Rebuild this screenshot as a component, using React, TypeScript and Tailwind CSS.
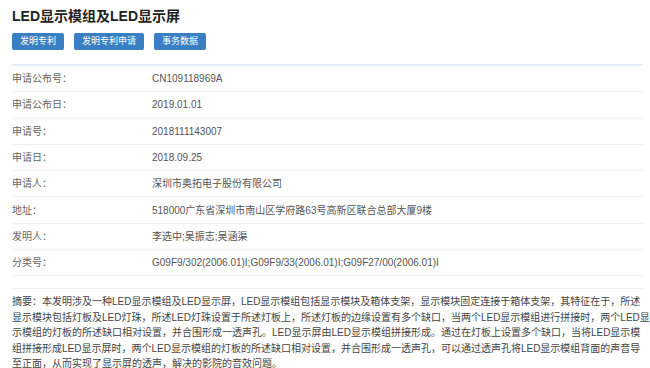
const rows = [
  { label: "申请公布号：", value: "CN109118969A" },
  { label: "申请公布日：", value: "2019.01.01" },
  { label: "申请号：", value: "2018111143007" },
  { label: "申请日：", value: "2018.09.25" },
  { label: "申请人：", value: "深圳市奥拓电子股份有限公司" },
  { label: "地址：", value: "518000广东省深圳市南山区学府路63号高新区联合总部大厦9楼" },
  { label: "发明人：", value: "李选中;吴振志;吴涵渠" },
  {
    label: "分类号：",
    value: "G09F9/302(2006.01)I;G09F9/33(2006.01)I;G09F27/00(2006.01)I",
  },
];

const tabs = ["发明专利", "发明专利申请", "事务数据"];

// line breaks follow the original page
const abstractLines = [
  "摘要：本发明涉及一种LED显示模组及LED显示屏，LED显示模组包括显示模块及箱体支架，显示模块固定连接于箱体支架，其特征在于，所述",
  "显示模块包括灯板及LED灯珠，所述LED灯珠设置于所述灯板上，所述灯板的边缘设置有多个缺口，当两个LED显示模组进行拼接时，两个LED显",
  "示模组的灯板的所述缺口相对设置，并合围形成一透声孔。LED显示屏由LED显示模组拼接形成。通过在灯板上设置多个缺口，当将LED显示模",
  "组拼接形成LED显示屏时，两个LED显示模组的灯板的所述缺口相对设置，并合围形成一透声孔，可以通过透声孔将LED显示模组背面的声音导",
  "至正面，从而实现了显示屏的透声，解决的影院的音效问题。",
];

export default function App() {
  return (
    <div className="w-[650px] h-[368px] overflow-hidden bg-white px-3 pt-[7px] font-['Helvetica','Liberation_Sans','Noto_Sans_CJK_SC',sans-serif]">
      <h1 className="text-[14px] leading-[18px] font-bold text-[#222]">
        LED显示模组及LED显示屏
      </h1>

      <div className="mt-[8px] flex gap-[10px]">
        {tabs.map((t) => (
          <button
            key={t}
            className="h-[17px] rounded-[2px] bg-[#3a7fc1] px-2 text-[9px] leading-[17px] text-white"
          >
            {t}
          </button>
        ))}
      </div>

      <div className="mt-[14px] w-[631px] border-t-2 border-[#e3ecf4]">
        {rows.map((r) => (
          <div
            key={r.label}
            className="flex h-[26.3px] items-center border-b border-[#edf2f7] text-[10px] text-[#555]"
          >
            <div className="w-[140px] shrink-0 text-[#666]">{r.label}</div>
            <div>{r.value}</div>
          </div>
        ))}
        <div className="h-[13px] border-b border-[#edf2f7]" />
      </div>

      <p className="mt-[5px] text-[10px] leading-[15.5px] text-[#444] whitespace-nowrap">
        {abstractLines.map((l, i) => (
          <span key={i} className="block">
            {l}
          </span>
        ))}
      </p>
    </div>
  );
}
